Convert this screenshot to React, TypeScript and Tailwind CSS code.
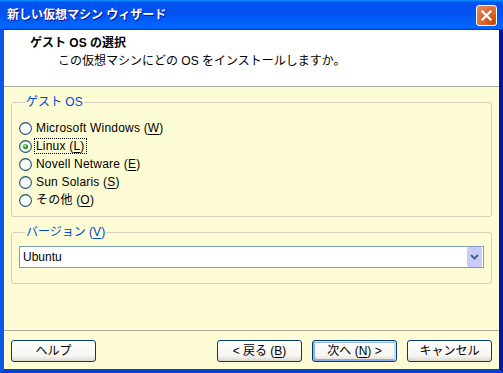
import type { ReactNode } from 'react';

const FONT = "font-['Liberation_Sans','Noto_Sans_CJK_JP',sans-serif]";

const OS_OPTIONS = [
  { label: 'Microsoft Windows', key: 'W' },
  { label: 'Linux', key: 'L' },
  { label: 'Novell Netware', key: 'E' },
  { label: 'Sun Solaris', key: 'S' },
  { label: 'その他', key: 'O' },
];

function Radio({ checked, id }: { checked: boolean; id: number }) {
  return (
    <svg width="13" height="13" viewBox="0 0 13 13" className="shrink-0">
      <defs>
        <linearGradient id={`rf${id}`} x1="0" y1="0" x2="1" y2="1">
          <stop offset="0%" stopColor="#dcdcd7" />
          <stop offset="45%" stopColor="#ffffff" />
          <stop offset="100%" stopColor="#f4f3ee" />
        </linearGradient>
        <radialGradient id={`rd${id}`} cx="0.4" cy="0.35" r="0.7">
          <stop offset="0%" stopColor="#a4e89f" />
          <stop offset="60%" stopColor="#2fa82f" />
          <stop offset="100%" stopColor="#1c7f1c" />
        </radialGradient>
      </defs>
      <circle cx="6.5" cy="6.5" r="5.9" fill={`url(#rf${id})`} stroke="#1c5180" strokeWidth="1.1" />
      {checked && <circle cx="6.5" cy="6.5" r="2.6" fill={`url(#rd${id})`} />}
    </svg>
  );
}

function Mnemonic({ text, k }: { text: string; k: string }) {
  return (
    <>
      {text} (<span className="underline underline-offset-[2px]">{k}</span>)
    </>
  );
}

function XpButton({ children, isDefault }: { children: ReactNode; isDefault?: boolean }) {
  return (
    <button
      type="button"
      className={
        'w-[85px] h-[22px] rounded-[3px] border border-[#003c74] bg-[linear-gradient(180deg,#ffffff_0%,#f6f5f1_75%,#dcd7cd_100%)] text-[12px] leading-[14px] text-black flex items-center justify-center ' +
        (isDefault
          ? 'shadow-[inset_-1px_1px_#cee7ff,inset_1px_2px_#98b8ea,inset_-2px_2px_#bcd4f6,inset_1px_-1px_#89ade4,inset_2px_-2px_#89ade4]'
          : '')
      }
    >
      {children}
    </button>
  );
}

export default function App() {
  return (
    <div className={`w-[503px] h-[373px] flex flex-col text-black ${FONT}`}>
      {/* title bar */}
      <div className="h-[30px] shrink-0 flex items-center justify-between pl-[7px] pr-[6px] bg-[linear-gradient(180deg,#0997ff_0%,#0053ee_8%,#0050ee_40%,#0066ff_88%,#0066ff_93%,#005bff_95%,#003dd7_96%,#003dd7_100%)]">
        <span className="text-white font-bold text-[12px] leading-[14px] [text-shadow:1px_1px_#0f1089]">
          新しい仮想マシン ウィザード
        </span>
        <div className="w-[21px] h-[21px] rounded-[3px] border border-white bg-[radial-gradient(circle_at_85%_85%,#cc4600_0%,#dc6527_40%,#e5886a_100%)] flex items-center justify-center">
          <svg width="13" height="13" viewBox="0 0 13 13">
            <path d="M2.5 2.5 L10.5 10.5 M10.5 2.5 L2.5 10.5" stroke="#ffffff" strokeWidth="2.2" strokeLinecap="square" />
          </svg>
        </div>
      </div>

      <div className="flex-1 flex flex-col border-l-[4px] border-r-[4px] border-b-[4px] border-l-[#0a58e5] border-r-[#0019a3] border-b-[#0a40d0]">
        {/* header */}
        <div className="h-[56px] shrink-0 bg-white pt-[4px] text-[12px] leading-[18px]">
          <div className="pl-[26px] font-bold">ゲスト OS の選択</div>
          <div className="pl-[54px]">この仮想マシンにどの OS をインストールしますか。</div>
        </div>
        <div className="h-px shrink-0 bg-[#aca899]" />

        {/* body */}
        <div className="flex-1 flex flex-col bg-[#fefcd4] px-[7px] pt-[8px]">
          <fieldset className="border border-[#d0d0bf] rounded-[3px] px-[7px] pt-[10px] pb-[7px]">
            <legend className="ml-[6px] px-[1px] text-[12px] leading-[14px] text-[#0046d5]">ゲスト OS</legend>
            {OS_OPTIONS.map((o, i) => (
              <div key={o.key} className="h-[18px] flex items-center text-[12px] leading-[12px] tracking-[0.2px]">
                <Radio checked={i === 1} id={i} />
                <span
                  className={
                    'ml-[2px] px-[1px] py-[1px] border ' +
                    (i === 1 ? 'border-dotted border-black' : 'border-transparent')
                  }
                >
                  <Mnemonic text={o.label} k={o.key} />
                </span>
              </div>
            ))}
          </fieldset>

          <fieldset className="mt-[8px] border border-[#d0d0bf] rounded-[3px] px-[7px] pt-[7px] pb-[15px]">
            <legend className="ml-[6px] px-[1px] text-[12px] leading-[14px] text-[#0046d5]">
              <Mnemonic text="バージョン" k="V" />
            </legend>
            <div className="h-[22px] border border-[#7f9db9] bg-white flex items-center justify-between p-px">
              <span className="pl-[2px] text-[12px] leading-[14px]">Ubuntu</span>
              <div className="w-[15px] h-[20px] rounded-[2px] bg-[#c9ccfb] flex items-center justify-center">
                <svg width="9" height="6" viewBox="0 0 9 6">
                  <path d="M1 1 L4.5 4.5 L8 1" fill="none" stroke="#4d6185" strokeWidth="2" />
                </svg>
              </div>
            </div>
          </fieldset>
        </div>

        {/* footer */}
        <div className="shrink-0 border-t border-[#aca899] bg-[#fefcd4] pt-[9px] pb-[7px] pl-[7px] pr-[7px] flex items-center">
          <XpButton>ヘルプ</XpButton>
          <div className="ml-auto flex gap-[10px]">
            <XpButton>
              &lt; 戻る (<span className="underline underline-offset-[2px]">B</span>)
            </XpButton>
            <XpButton isDefault>
              次へ (<span className="underline underline-offset-[2px]">N</span>) &gt;
            </XpButton>
            <XpButton>キャンセル</XpButton>
          </div>
        </div>
      </div>
    </div>
  );
}
